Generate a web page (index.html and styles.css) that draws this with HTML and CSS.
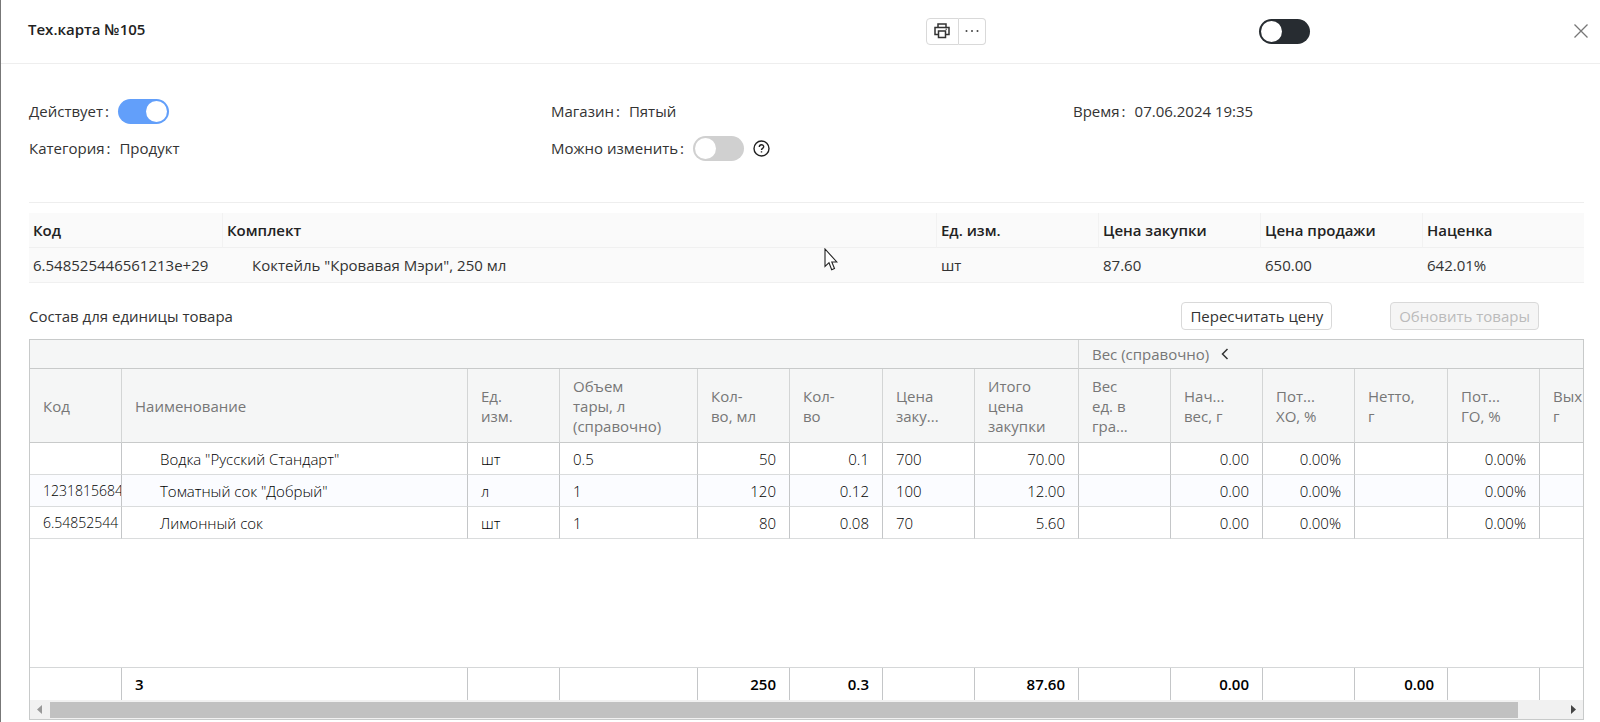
FILE: index.html
```html
<!DOCTYPE html>
<html lang="ru">
<head>
<meta charset="utf-8">
<title>Тех.карта №105</title>
<link rel="stylesheet" href="styles.css">
</head>
<body>
<div class="drawer">
  <header class="head">
    <h1 class="title">Тех.карта №105</h1>
    <div class="btn-group">
      <button type="button" class="icon-btn" aria-label="Печать">
        <svg width="18" height="18" viewBox="0 0 18 18" fill="none" stroke="#333" stroke-width="1.5"><path d="M5 5.5V2h8v3.5M5 12.500H2V5.500h14v7h-3M5.500 9h7v6.500h-7z"/><path d="M12.500 7.200h1.500" stroke-width="1"/></svg>
      </button>
      <button type="button" class="icon-btn icon-btn-more" aria-label="Ещё">
        <svg width="14" height="4" viewBox="0 0 14 4" fill="#444"><circle cx="1.500" cy="2" r="1"/><circle cx="7" cy="2" r="1"/><circle cx="12.500" cy="2" r="1"/></svg>
      </button>
    </div>
    <div><input type="checkbox" class="switch switch-dark" aria-label="Тема"></div>
    <button type="button" class="close" aria-label="Закрыть">
      <svg width="16" height="16" viewBox="0 0 16 16" stroke="#777" stroke-width="1.300"><path d="M1.500 1.500l13 13M14.500 1.500l-13 13"/></svg>
    </button>
  </header>

  <main class="main">
    <section class="fields">
      <div class="field"><label class="label" for="active">Действует</label><input type="checkbox" class="switch" id="active" checked></div>
      <div class="field"><span class="label">Магазин</span><span>Пятый</span></div>
      <div class="field"><span class="label">Время</span><span>07.06.2024 19:35</span></div>
      <div class="field"><span class="label">Категория</span><span>Продукт</span></div>
      <div class="field"><label class="label" for="editable">Можно изменить</label><input type="checkbox" class="switch" id="editable">
        <svg class="help" width="17" height="17" viewBox="0 0 17 17" fill="none" stroke="#222" stroke-width="1.400"><circle cx="8.500" cy="8.500" r="7.500"/><path d="M6.300 7c0-3 4.400-2.900 4.400-.2 0 1.500-2.200 1.600-2.200 3.200M8.500 11.300v1.300"/></svg>
      </div>
    </section>

    <table class="kit">
      <colgroup><col class="k-code"><col class="k-name"><col class="k-num"><col class="k-num"><col class="k-num"><col class="k-num"></colgroup>
      <thead><tr><th>Код</th><th>Комплект</th><th>Ед. изм.</th><th>Цена закупки</th><th>Цена продажи</th><th>Наценка</th></tr></thead>
      <tbody><tr><td>6.548525446561213e+29</td><td class="nested">Коктейль "Кровавая Мэри", 250 мл</td><td>шт</td><td>87.60</td><td>650.00</td><td>642.01%</td></tr></tbody>
    </table>

    <div class="bar">
      <h2 class="subtitle">Состав для единицы товара</h2>
      <button type="button" class="btn">Пересчитать цену</button>
      <button type="button" class="btn" disabled>Обновить товары</button>
    </div>

    <section class="grid">
      <div class="rows">
        <table class="items">
          <colgroup><col class="w92"><col class="w346"><col class="w92"><col class="w138"><col class="w92"><col class="w93"><col class="w92"><col class="w104"><col class="w92"><col class="w92"><col class="w92"><col class="w93"><col class="w92"><col class="w92"></colgroup>
          <thead>
            <tr class="groups"><th colspan="8"></th><th colspan="6">Вес (справочно) <svg class="fold" width="8" height="12" viewBox="0 0 8 12" fill="none" stroke="#333" stroke-width="1.500"><path d="M6.500 1L1.500 6l5 5"/></svg></th></tr>
            <tr class="columns"><th>Код</th><th>Наименование</th><th>Ед.<br>изм.</th><th>Объем<br>тары, л<br>(справочно)</th><th>Кол-<br>во, мл</th><th>Кол-<br>во</th><th>Цена<br>заку...</th><th>Итого<br>цена<br>закупки</th><th>Вес<br>ед. в<br>гра...</th><th>Нач...<br>вес, г</th><th>Пот...<br>ХО, %</th><th>Нетто,<br>г</th><th>Пот...<br>ГО, %</th><th>Вых<br>г</th></tr>
          </thead>
          <tbody>
            <tr><td></td><td class="nested">Водка "Русский Стандарт"</td><td>шт</td><td>0.5</td><td class="n">50</td><td class="n">0.1</td><td>700</td><td class="n">70.00</td><td></td><td class="n">0.00</td><td class="n">0.00%</td><td></td><td class="n">0.00%</td><td></td></tr>
            <tr><td><div class="clip">1231815684</div></td><td class="nested">Томатный сок "Добрый"</td><td>л</td><td>1</td><td class="n">120</td><td class="n">0.12</td><td>100</td><td class="n">12.00</td><td></td><td class="n">0.00</td><td class="n">0.00%</td><td></td><td class="n">0.00%</td><td></td></tr>
            <tr><td><div class="clip">6.54852544</div></td><td class="nested">Лимонный сок</td><td>шт</td><td>1</td><td class="n">80</td><td class="n">0.08</td><td>70</td><td class="n">5.60</td><td></td><td class="n">0.00</td><td class="n">0.00%</td><td></td><td class="n">0.00%</td><td></td></tr>
          </tbody>
        </table>
      </div>
      <div class="totals">
        <table class="items">
          <colgroup><col class="w92"><col class="w346"><col class="w92"><col class="w138"><col class="w92"><col class="w93"><col class="w92"><col class="w104"><col class="w92"><col class="w92"><col class="w92"><col class="w93"><col class="w92"><col class="w92"></colgroup>
          <tbody><tr><td></td><td>3</td><td></td><td></td><td class="n">250</td><td class="n">0.3</td><td></td><td class="n">87.60</td><td></td><td class="n">0.00</td><td></td><td class="n">0.00</td><td></td><td></td></tr></tbody>
        </table>
      </div>
      <div class="scroll">
        <svg width="5" height="9" viewBox="0 0 5 9" fill="#999"><path d="M5 0v9L0 4.500z"/></svg>
        <div class="track"><div class="thumb"></div></div>
        <svg width="5" height="9" viewBox="0 0 5 9" fill="#444"><path d="M0 0v9l5-4.500z"/></svg>
      </div>
    </section>
  </main>
  <svg class="pointer" width="14" height="23" viewBox="0 0 14 23" fill="#fff" stroke="#222" stroke-width="1.100"><path d="M1 1v17.500l4-3.800 2.700 7 2.800-1.200-2.700-6.500h5z"/></svg>
</div>
</body>
</html>
```
FILE: styles.css
```css
* { box-sizing: border-box; }
body { margin: 0; background: #fff; color: #333; font: 15px/20px "Open Sans", "Noto Sans", sans-serif; }
button { font: inherit; color: inherit; margin: 0; cursor: pointer; }
svg { display: block; flex: none; }

.drawer { display: flex; flex-direction: column; min-height: 100vh; border-left: 1px solid #777; position: relative; }
.head { display: grid; grid-template-columns: 897fr 333fr 314fr auto; align-items: center; height: 64px; padding: 0 11px 1px 27px; border-bottom: 1px solid #eee; }
.title { margin: 0; font-size: 15px; font-weight: 600; color: #222; padding-bottom: 5px; }
.btn-group { display: flex; }
.icon-btn { display: flex; align-items: center; justify-content: center; width: 33px; height: 27px; padding: 0; background: #fff; border: 1px solid #d9d9d9; border-radius: 4px 0 0 4px; }
.icon-btn-more { width: 27px; border-left: 0; border-radius: 0 4px 4px 0; }
.close { padding: 0; border: 0; background: none; }

.switch { appearance: none; display: block; flex: none; width: 51px; height: 25px; margin: 0; padding: 2px; border-radius: 13px; background: #d0d0d0; }
.switch::before { content: ""; display: block; width: 21px; height: 21px; border-radius: 50%; background: #fff; }
.switch:checked { background: #629ffa; }
.switch:checked::before { margin-left: auto; }
.switch-dark { background: #272c31; }

.main { flex: 1; display: flex; flex-direction: column; padding: 0 16px 2px 28px; }
.fields { display: grid; grid-template-columns: repeat(3, 1fr); row-gap: 7px; margin-right: -11px; padding: 32px 0 39px; }
.field { display: flex; align-items: center; height: 30px; }
.label { margin-right: 9px; }
.label::after { content: ":"; margin-left: 2px; }
.help { margin-left: 9px; }

table { table-layout: fixed; border-collapse: separate; border-spacing: 0; }
th, td { text-align: left; font-weight: 400; white-space: nowrap; overflow: hidden; }

.kit { width: 100%; border-top: 1px solid #eee; padding-top: 10px; }
.kit th, .kit td { height: 35px; padding: 0 4px; background: #fafafa; border-bottom: 1px solid #f0f0f0; }
.kit th { color: #222; font-weight: 600; }
.kit th + th { border-left: 1px solid #f2f2f2; }
.kit td + td { padding-left: 5px; }
.kit td.nested { padding-left: 30px; }
.k-code { width: 193px; }
.k-num { width: 162px; }

.bar { display: flex; align-items: center; padding: 19px 45px 9px 0; }
.subtitle { flex: 1; margin: 0; font-size: 15px; font-weight: 400; }
.btn { height: 28px; padding: 0 8px; background: #fff; border: 1px solid #d9d9d9; border-radius: 4px; }
.btn + .btn { margin-left: 58px; }
.btn:disabled { color: #bbb; background: #f5f5f5; cursor: default; }

.grid { flex: 1; display: flex; flex-direction: column; border: 1px solid #c8caca; overflow: hidden; }
.rows { flex: 1; overflow: hidden; }
.items { width: 1602px; }
.w92 { width: 92px; }
.w93 { width: 93px; }
.w104 { width: 104px; }
.w138 { width: 138px; }
.w346 { width: 346px; }
.items th { padding: 0 13px; color: #777; background: #f5f6f6; border-right: 1px solid #d3d5d5; border-bottom: 1px solid #c8caca; }
.groups th { height: 29px; }
.columns th { height: 74px; }
.fold { display: inline-block; margin-left: 8px; }
.items td { height: 32px; padding: 0 13px; font-weight: 300; color: #000; border-right: 1px solid #c4c6c8; border-bottom: 1px solid #dadcdd; }
.items tr:nth-child(2) td { background: #fbfcff; }
.items td.nested { padding-left: 38px; }
.items td.n { text-align: right; }
.clip { overflow: hidden; margin-right: -13px; font-size: 14px; }
.totals { border-top: 1px solid #d5d7d8; overflow: hidden; }
.totals .items td { height: 32px; border-bottom: 0; font-weight: 600; }

.scroll { display: flex; align-items: center; gap: 8px; height: 19px; padding: 0 7px; background: #f1f1f1; }
.track { flex: 1; }
.thumb { width: 97%; height: 16px; background: #c1c1c1; }
.pointer { position: absolute; left: 823px; top: 248px; }
```
